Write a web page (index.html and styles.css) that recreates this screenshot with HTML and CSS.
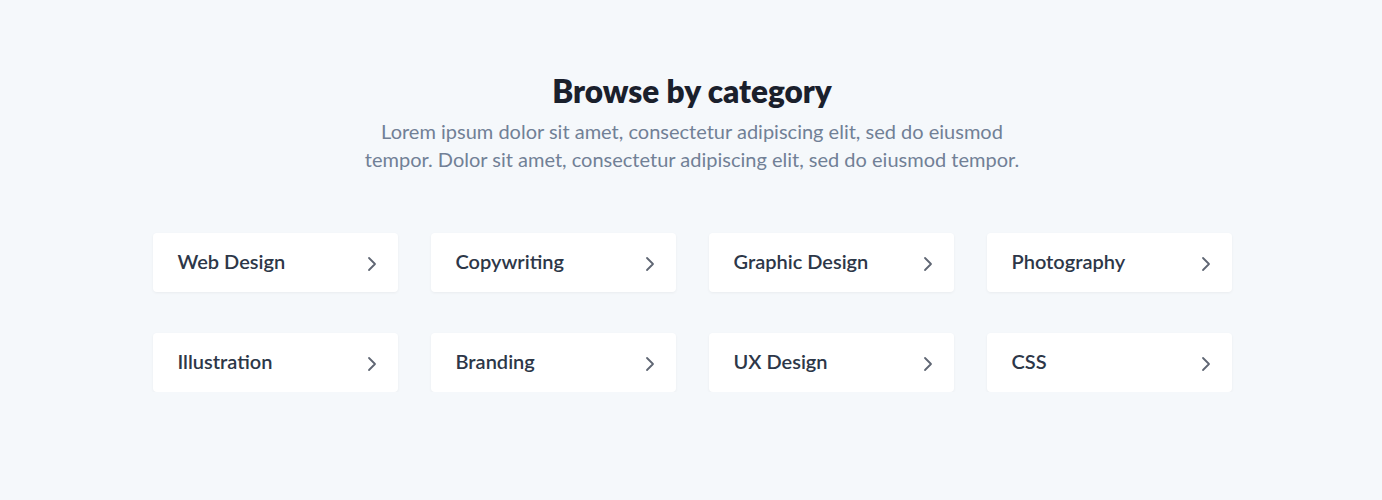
FILE: index.html
```html
<!DOCTYPE html>
<html lang="en">

<head>
    <meta charset="UTF-8">
    <meta name="viewport" content="width=device-width, initial-scale=1.0">
    <title>Browse by category</title>
    <link rel="stylesheet" href="styles.css">
</head>

<body>
    <section class="categories">
        <div class="intro">
            <h2>Browse by category</h2>
            <p>Lorem ipsum dolor sit amet, consectetur adipiscing elit, sed do eiusmod tempor. Dolor sit amet, consectetur adipiscing elit, sed do eiusmod tempor.</p>
        </div>

        <div class="category-grid">
            <a class="category-card" href="#"><span>Web Design</span>
                <svg viewBox="0 0 10 16"><path d="M2 2l6 6-6 6" /></svg></a>
            <a class="category-card" href="#"><span>Copywriting</span>
                <svg viewBox="0 0 10 16"><path d="M2 2l6 6-6 6" /></svg></a>
            <a class="category-card" href="#"><span>Graphic Design</span>
                <svg viewBox="0 0 10 16"><path d="M2 2l6 6-6 6" /></svg></a>
            <a class="category-card" href="#"><span>Photography</span>
                <svg viewBox="0 0 10 16"><path d="M2 2l6 6-6 6" /></svg></a>
            <a class="category-card" href="#"><span>Illustration</span>
                <svg viewBox="0 0 10 16"><path d="M2 2l6 6-6 6" /></svg></a>
            <a class="category-card" href="#"><span>Branding</span>
                <svg viewBox="0 0 10 16"><path d="M2 2l6 6-6 6" /></svg></a>
            <a class="category-card" href="#"><span>UX Design</span>
                <svg viewBox="0 0 10 16"><path d="M2 2l6 6-6 6" /></svg></a>
            <a class="category-card" href="#"><span>CSS</span>
                <svg viewBox="0 0 10 16"><path d="M2 2l6 6-6 6" /></svg></a>
        </div>
    </section>
</body>

</html>
```

FILE: styles.css
```css
* {
    margin: 0;
    padding: 0;
    box-sizing: border-box;
    font-family: 'Lato', 'Open Sans', sans-serif;
}

body {
    background-color: #f5f8fb;
    color: #2d3748;
}

.categories {
    max-width: 1080px;
    margin: 0 auto;
    padding: 72px 0 0 2px;
}

.intro {
    text-align: center;
    margin-bottom: 60px;
}

.intro h2 {
    font-size: 31.5px;
    font-weight: 800;
    color: #1a202c;
    line-height: 38px;
    margin-bottom: 7px;
}

.intro p {
    max-width: 680px;
    margin: 0 auto;
    font-size: 20px;
    line-height: 28px;
    color: #718096;
}

.category-grid {
    display: grid;
    grid-template-columns: repeat(4, 245px);
    column-gap: 33px;
    row-gap: 41px;
    justify-content: center;
}

.category-card {
    display: flex;
    align-items: center;
    justify-content: space-between;
    height: 59px;
    padding: 0 21px 0 25px;
    background: white;
    border-radius: 4px;
    box-shadow: 0 1px 3px rgba(0, 0, 0, 0.05);
    text-decoration: none;
    color: #2d3748;
    font-size: 20px;
    font-weight: 600;
}

.category-card span {
    margin-top: -4px;
}

.category-card svg {
    width: 10px;
    height: 16px;
    margin-top: 3px;
    fill: none;
    stroke: #5f6673;
    stroke-width: 1.8;
    stroke-linecap: round;
    stroke-linejoin: round;
}
```
